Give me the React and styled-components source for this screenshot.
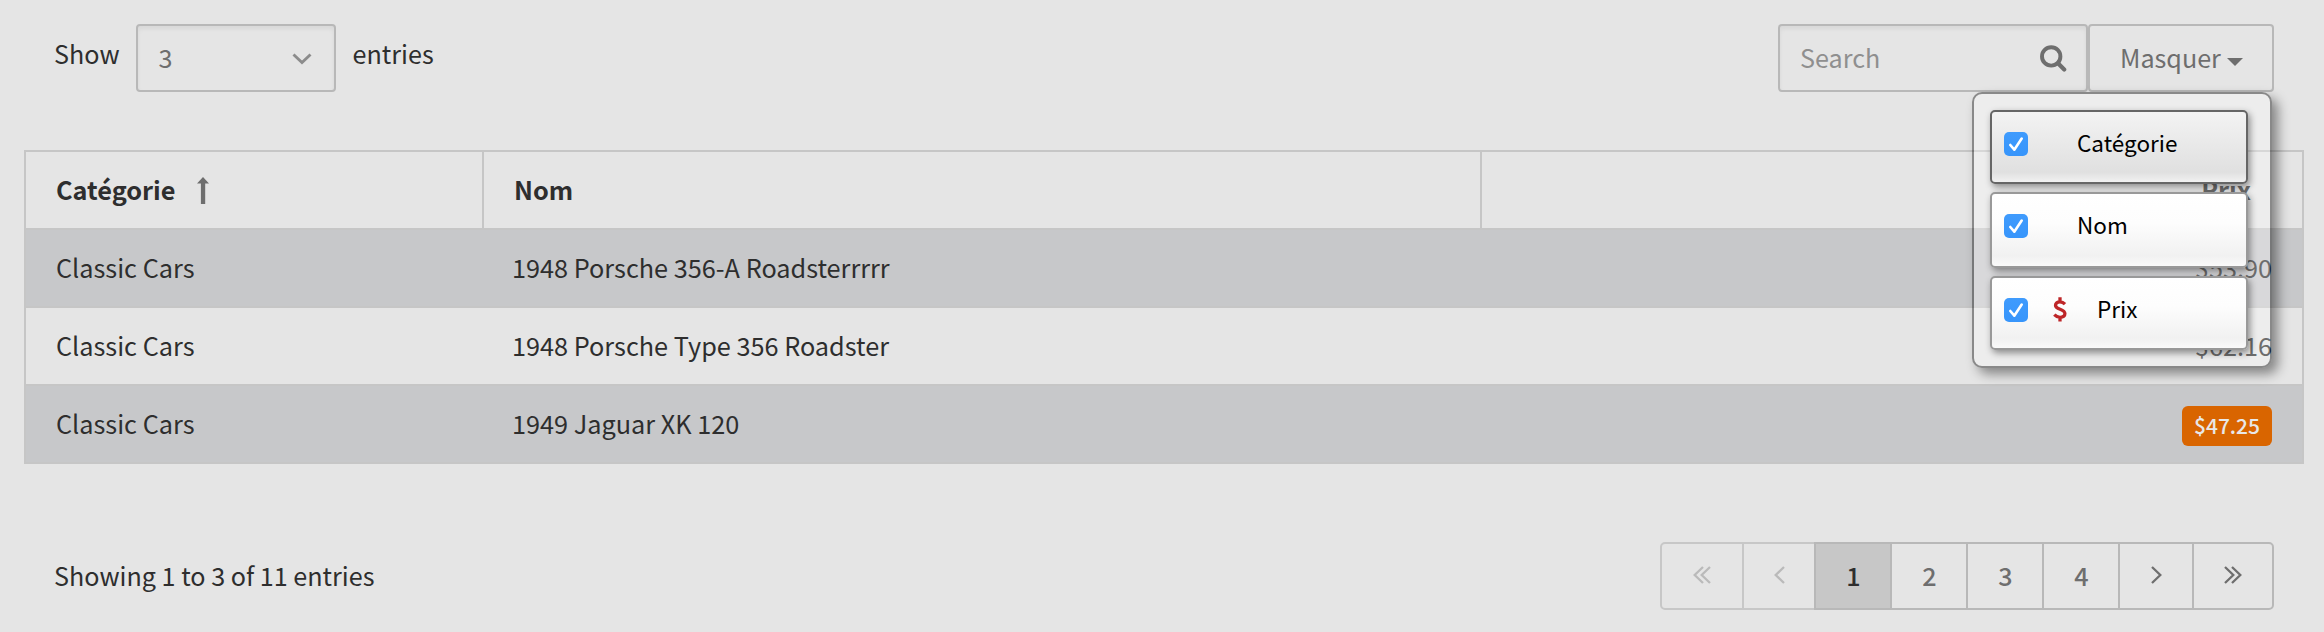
import React from "react";
import styled, { createGlobalStyle, css } from "styled-components";

const GlobalStyle = createGlobalStyle`
  * { box-sizing: border-box; }
  body {
    margin: 0;
    background: #e5e5e5;
    color: #2e2e2e;
    font-family: "Noto Sans CJK SC", "Open Sans", sans-serif;
    font-size: 25.15px;
    line-height: 36px;
  }
`;

const Page = styled.main`
  height: 632px;
  overflow: hidden;
  padding: 24px 20px 0 24px;
`;

const Toolbar = styled.div`
  display: flex;
  justify-content: space-between;
  height: 68px;
  padding: 0 30px 0 30px;
  margin-bottom: 58px;
`;

const LengthControl = styled.label`
  display: flex;
  align-items: flex-start;
`;

const LengthText = styled.span`
  margin-top: 11px;
  white-space: nowrap;
`;

const field = css`
  display: flex;
  align-items: center;
  height: 68px;
  border: 2px solid #b8b8b8;
  border-radius: 4px;
  color: #6e6e6e;
`;

const SelectBox = styled.span`
  ${field}
  width: 200px;
  margin: 0 17px 0 16px;
  padding: 0 22px 2px 21px;
  justify-content: space-between;
  box-shadow: inset 0 3px 4px rgba(0, 0, 0, 0.06);
`;

const Chevron = styled.svg`
  margin-top: 3px;
`;

const Actions = styled.div`
  display: flex;
`;

const SearchBox = styled.div`
  ${field}
  width: 310px;
  padding: 0 19px 2px 20px;
  justify-content: space-between;
  color: #8f8f8f;
  box-shadow: inset 0 3px 4px rgba(0, 0, 0, 0.06);
`;

const Magnifier = styled.svg`
  margin-top: 3px;
`;

const MenuAnchor = styled.div`
  position: relative;
`;

const MenuButton = styled.div`
  ${field}
  width: 186px;
  padding: 0 0 2px 30px;
`;

const Caret = styled.span`
  margin: 9px 0 0 6px;
  border: 8px solid transparent;
  border-top-color: #6e6e6e;
  border-bottom: 0;
`;

const Menu = styled.div`
  position: absolute;
  z-index: 2;
  top: 68px;
  right: 2px;
  width: 300px;
  height: 276px;
  padding: 16px 22px 0 16px;
  display: flex;
  flex-direction: column;
  gap: 8px;
  border: 2px solid rgba(0, 0, 0, 0.4);
  border-radius: 10px;
  background: rgba(255, 255, 255, 0.3);
  background-clip: padding-box;
  box-shadow: 6px 6px 12px rgba(0, 0, 0, 0.42);
`;

const MenuItem = styled.div`
  display: flex;
  align-items: flex-start;
  height: ${(p) => p.$height}px;
  padding: 20px 0 0 12px;
  border: 2px solid ${(p) => (p.$active ? "#666" : "#999")};
  border-radius: 5px;
  background: ${(p) =>
    p.$active
      ? "linear-gradient(#f3f3f3, #e0e0e0 86%, #f1f1f1)"
      : "linear-gradient(#fff, #fdfdfd 40%, #f1f1f1 86%, #fafafa)"};
  box-shadow: 2px 3px 7px rgba(0, 0, 0, 0.42);
  color: #000;
  font-size: 22.5px;
  line-height: 24px;
`;

const Check = styled.span`
  display: flex;
  width: 24px;
  height: 24px;
  border-radius: 5px;
  background: linear-gradient(#3f9bfd, #3795fb);
`;

const Currency = styled.span`
  display: flex;
  width: 15px;
  margin: -1px 0 0 25px;
  color: #be2628;
`;

const MenuText = styled.span`
  margin: -2px 0 0 ${(p) => (p.$icon ? 29 : 49)}px;
`;

const Table = styled.table`
  width: 2280px;
  table-layout: fixed;
  border: 2px solid #c6c6c6;
  border-bottom: 0;
  border-spacing: 0;
`;

const Head = styled.th`
  width: ${(p) => p.$width}px;
  height: 78px;
  padding: ${(p) => (p.$end ? "0 51px 2px 0" : "0 30px 2px")};
  border-bottom: 2px solid #c6c6c6;
  border-right: ${(p) => (p.$end ? 0 : 2)}px solid #c6c6c6;
  text-align: ${(p) => (p.$end ? "right" : "left")};
  font-size: 25.3px;
  font-weight: 700;
`;

const SortArrow = styled.svg`
  margin-left: 21px;
  vertical-align: -4px;
`;

const Row = styled.tr`
  background: ${(p) => (p.$striped ? "#c7c8ca" : "transparent")};
`;

const Cell = styled.td`
  height: 78px;
  padding: 0 30px 2px ${(p) => (p.$tight ? 28 : 30)}px;
  border-bottom: 2px solid #c6c6c6;
  text-align: ${(p) => (p.$end ? "right" : "left")};
  font-size: 25.28px;
`;

const Badge = styled.span`
  display: inline-block;
  vertical-align: middle;
  width: 90px;
  height: 40px;
  margin-top: 5px;
  border-radius: 6px;
  background: #d96500;
  color: #e8e8e8;
  font-size: 21px;
  font-weight: 500;
  line-height: 38px;
  text-align: center;
`;

const Footer = styled.div`
  display: flex;
  justify-content: space-between;
  padding: 78px 30px 0 30px;
`;

const Info = styled.span`
  margin-top: 15px;
`;

const Pager = styled.div`
  display: flex;
`;

const PageButton = styled.span`
  position: relative;
  z-index: ${(p) => (p.$disabled ? 0 : 1)};
  display: flex;
  align-items: center;
  justify-content: center;
  width: ${(p) => p.$width}px;
  height: 68px;
  padding: 0 0 2px ${(p) => (p.$number ? 1 : 0)}px;
  border: 2px solid ${(p) => (p.$disabled ? "#c7c7c7" : "#b8b8b8")};
  background: ${(p) => (p.$current ? "#c7c7c7" : "#e5e5e5")};
  color: ${(p) => (p.$current ? "#2e2e2e" : p.$disabled ? "#bababa" : "#6e6e6e")};
  font-weight: 500;
  & + & { margin-left: -2px; }
  &:first-child { border-radius: 5px 0 0 5px; }
  &:last-child { border-radius: 0 5px 5px 0; }
`;

const Angle = ({ double, left }) => {
  const w = double ? 18 : 11;
  return (
    <svg width={w} height="18" viewBox={`0 0 ${w} 18`} fill="none" stroke="currentColor" strokeWidth="2.3">
      <g transform={left ? `translate(${w} 0) scale(-1 1)` : undefined}>
        <path d="M1 1l8.3 8L1 17" />
        {double && <path d="M8 1l8.3 8L8 17" />}
      </g>
    </svg>
  );
};

const Checkbox = () => (
  <Check>
    <svg width="24" height="24" viewBox="0 0 24 24" fill="none" stroke="#fff" strokeWidth="2.6" strokeLinecap="round" strokeLinejoin="round">
      <path d="M6.3 13l4 4.7L17.7 6.5" />
    </svg>
  </Check>
);

const rows = [
  ["Classic Cars", "1948 Porsche 356-A Roadsterrrrr", "$53.90"],
  ["Classic Cars", "1948 Porsche Type 356 Roadster", "$62.16"],
  ["Classic Cars", "1949 Jaguar XK 120", "$47.25"],
];

export default function App() {
  return (
    <>
      <GlobalStyle />
      <Page>
        <Toolbar>
          <LengthControl>
            <LengthText>Show</LengthText>
            <SelectBox>
              3
              <Chevron width="20" height="12" viewBox="0 0 20 12" fill="none" stroke="#8c8c8c" strokeWidth="2.9">
                <path d="M1.5 1.5l8.5 8 8.5-8" />
              </Chevron>
            </SelectBox>
            <LengthText>entries</LengthText>
          </LengthControl>
          <Actions>
            <SearchBox>
              Search
              <Magnifier width="27" height="27" viewBox="0 0 27 27" fill="none" stroke="#6e6e6e">
                <circle cx="11.2" cy="11.4" r="9.2" strokeWidth="3.9" />
                <path d="M18 18.3l6.2 6.2" strokeWidth="4.2" strokeLinecap="round" />
              </Magnifier>
            </SearchBox>
            <MenuAnchor>
              <MenuButton>
                Masquer
                <Caret />
              </MenuButton>
              <Menu>
                <MenuItem $height={74} $active>
                  <Checkbox />
                  <MenuText>Catégorie</MenuText>
                </MenuItem>
                <MenuItem $height={76}>
                  <Checkbox />
                  <MenuText>Nom</MenuText>
                </MenuItem>
                <MenuItem $height={74}>
                  <Checkbox />
                  <Currency>
                    <svg width="14" height="25" viewBox="0 0 14 25" fill="none" stroke="currentColor" strokeWidth="3.3">
                      <path d="M12 7.2C10.500 5.600 8.900 4.900 6.900 4.900C4.200 4.900 2.500 6.200 2.500 8.200C2.500 13 11.900 11.400 11.900 16.600C11.900 18.900 10 20.300 7 20.300C4.800 20.300 2.900 19.400 1.300 17.700M7 0.300V5M7 20V24.600" />
                    </svg>
                  </Currency>
                  <MenuText $icon>Prix</MenuText>
                </MenuItem>
              </Menu>
            </MenuAnchor>
          </Actions>
        </Toolbar>
        <Table>
          <thead>
            <tr>
              <Head $width={458}>
                Catégorie
                <SortArrow width="12" height="27" viewBox="0 0 12 27" fill="#6e6e6e">
                  <path d="M6 0l6 6.500H8.200V27H3.900V6.500H0z" />
                </SortArrow>
              </Head>
              <Head $width={998}>Nom</Head>
              <Head $width={820} $end>Prix</Head>
            </tr>
          </thead>
          <tbody>
            {rows.map(([category, name, price], i) => (
              <Row key={name} $striped={i % 2 === 0}>
                <Cell>{category}</Cell>
                <Cell $tight>{name}</Cell>
                <Cell $end>{i === 2 ? <Badge>{price}</Badge> : price}</Cell>
              </Row>
            ))}
          </tbody>
        </Table>
        <Footer>
          <Info>Showing 1 to 3 of 11 entries</Info>
          <Pager>
            <PageButton $width={84} $disabled><Angle double left /></PageButton>
            <PageButton $width={74} $disabled><Angle left /></PageButton>
            <PageButton $width={78} $number $current>1</PageButton>
            <PageButton $width={78} $number>2</PageButton>
            <PageButton $width={78} $number>3</PageButton>
            <PageButton $width={78} $number>4</PageButton>
            <PageButton $width={76}><Angle /></PageButton>
            <PageButton $width={82}><Angle double /></PageButton>
          </Pager>
        </Footer>
      </Page>
    </>
  );
}
